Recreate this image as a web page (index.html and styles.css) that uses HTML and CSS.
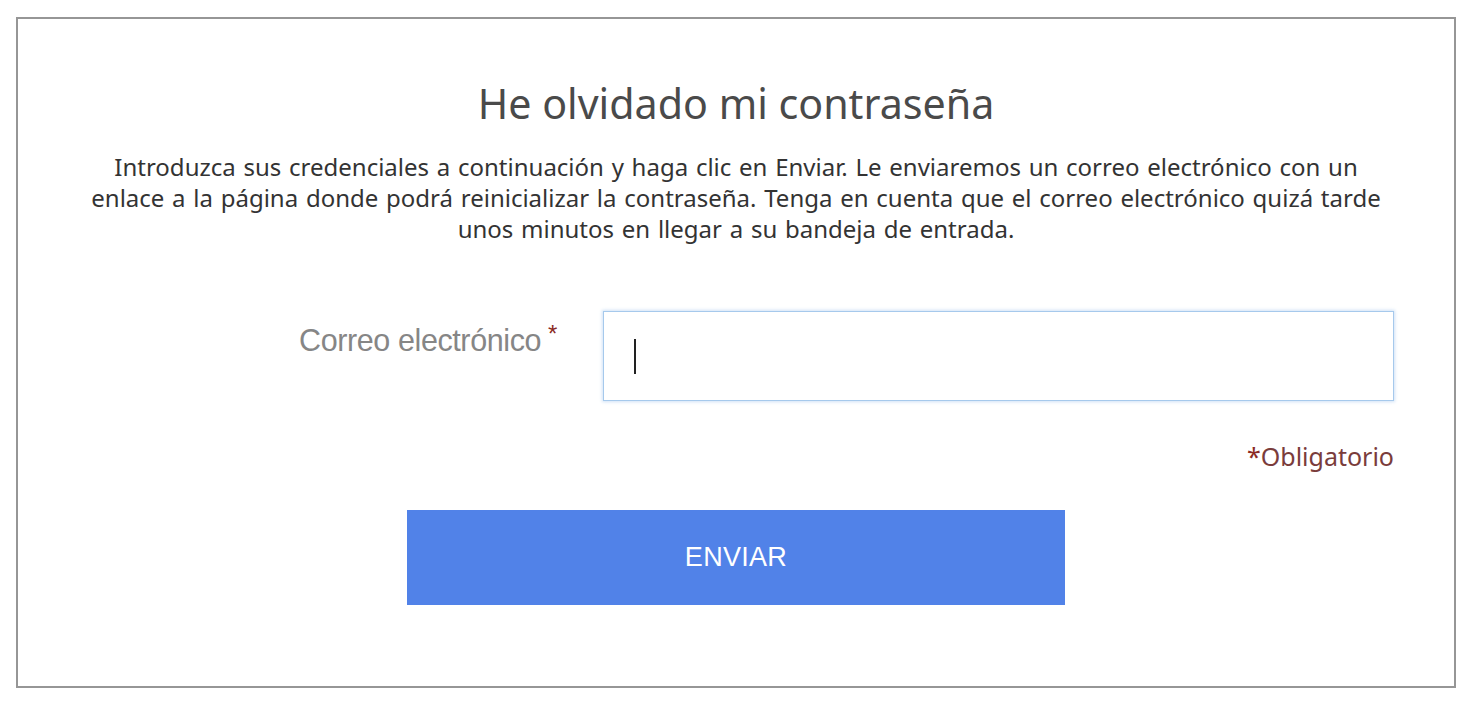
FILE: index.html
```html
<!DOCTYPE html>
<html lang="es">
<head>
<meta charset="utf-8">
<title>He olvidado mi contraseña</title>
<link rel="stylesheet" href="styles.css">
</head>
<body>
<div class="card">
  <h1 class="title">He olvidado mi contraseña</h1>
  <p class="intro">Introduzca sus credenciales a continuación y haga clic en Enviar. Le enviaremos un correo electrónico con un enlace a la página donde podrá reinicializar la contraseña. Tenga en cuenta que el correo electrónico quizá tarde unos minutos en llegar a su bandeja de entrada.</p>
  <div class="field">
    <label class="label" for="email">Correo electrónico<span class="req">*</span></label>
    <div class="input"><span class="caret"></span></div>
  </div>
  <div class="required-note"><span class="star">*</span>Obligatorio</div>
  <div class="actions">
    <button class="submit">ENVIAR</button>
  </div>
</div>
</body>
</html>
```
FILE: styles.css
```css
html, body { margin: 0; padding: 0; background: #fff; }
body { padding: 17px 0 0 16px; font-family: "Noto Sans", "Open Sans", sans-serif; }
.card {
  width: 1436px;
  height: 667px;
  border: 2px solid #969696;
  box-sizing: content-box;
  display: flex;
  flex-direction: column;
  align-items: center;
}
.title {
  margin: 56px 0 0;
  font-weight: 400;
  font-size: 41.2px;
  line-height: 56px;
  color: #4a4a4a;
}
.intro {
  margin: 20px 0 0;
  width: 1300px;
  text-align: center;
  font-size: 24px;
  word-spacing: 1.5px;
  line-height: 31px;
  color: #333;
}
.field {
  margin-top: 67px;
  width: 1436px;
  display: flex;
  align-items: flex-start;
}
.label {
  width: 539px;
  text-align: right;
  padding-top: 6px;
  font-family: "Liberation Sans", Arial, sans-serif;
  font-size: 30.5px;
  line-height: 34px;
  color: #868686;
  letter-spacing: -0.4px;
}
.req {
  color: #8b2a24;
  font-size: 24px;
  vertical-align: 9px;
  margin-left: 7px;
}
.input {
  margin-left: 46px;
  width: 791px;
  height: 90px;
  border: 1px solid #a6c9ec;
  box-shadow: 0 0 3px 1px rgba(150, 190, 235, 0.45);
  background: #fff;
  display: flex;
  align-items: center;
  padding-left: 30px;
  box-sizing: border-box;
}
.caret {
  width: 2px;
  height: 35px;
  background: #222;
}
.required-note {
  align-self: flex-end;
  margin: 39px 60px 0 0;
  font-size: 25px;
  line-height: 32px;
  color: #7a3c3b;
}
.star { color: #8b2a24; }
.actions { margin-top: 38px; }
.submit {
  width: 658px;
  height: 95px;
  border: none;
  background: #5182e8;
  color: #fff;
  font-family: "Liberation Sans", Arial, sans-serif;
  font-size: 27px;
  letter-spacing: 0.3px;
  cursor: pointer;
}
```
